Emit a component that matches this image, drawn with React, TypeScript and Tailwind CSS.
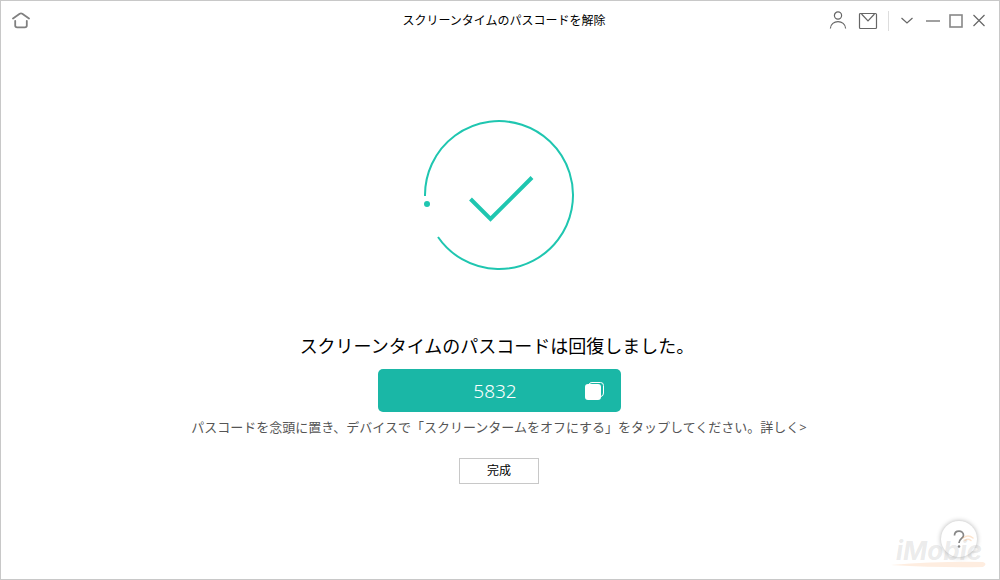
import type { ReactNode } from "react";

function TitleButton({ label, className, children }: { label: string; className: string; children: ReactNode }) {
    return (
        <button type="button" aria-label={label} className={`flex h-6 items-center justify-center text-[#666666] ${className}`}>
            {children}
        </button>
    );
}

function TitleBar() {
    return (
        <header className="grid h-10 grid-cols-[1fr_auto_1fr] items-center">
            <TitleButton label="ホーム" className="ml-2 w-6 justify-self-start">
                <svg width="20" height="18" viewBox="0 0 20 18" fill="none" stroke="#808080" strokeWidth="1.8" strokeLinecap="round" strokeLinejoin="round">
                    <path d="M2 6.5 L8.7 1.8 Q10 1 11.3 1.8 L18 6.5" />
                    <path d="M4.2 8.8 V13.5 Q4.2 15.4 6.2 15.4 H13.8 Q15.8 15.4 15.8 13.5 V8.8" />
                </svg>
            </TitleButton>

            <h1 className="pl-2 text-xs text-black">スクリーンタイムのパスコードを解除</h1>

            <div className="flex items-center justify-self-end pr-2">
                <TitleButton label="アカウント" className="w-6">
                    <svg width="18" height="20" viewBox="0 0 18 20" fill="none" stroke="currentColor" strokeWidth="1.2">
                        <circle cx="9" cy="4.5" r="3.6" />
                        <path d="M1.4 17.5 C1.6 8.4 16.4 8.4 16.6 17.5" />
                    </svg>
                </TitleButton>
                <TitleButton label="メール" className="ml-1.5 mr-2 w-6">
                    <svg width="20" height="18" viewBox="0 0 20 18" fill="none" stroke="currentColor" strokeWidth="1.2">
                        <rect x="1.5" y="1.5" width="17" height="15" rx="1" />
                        <path d="M3.500 2 L10 8.800 L16.500 2" />
                    </svg>
                </TitleButton>
                <span className="h-5 w-px bg-[#dddddd]" />
                <TitleButton label="メニュー" className="ml-1 w-7">
                    <svg width="14" height="8" viewBox="0 0 14 8" fill="none" stroke="currentColor" strokeWidth="1.2">
                        <path d="M1.5 1 L7 6 L12.5 1" />
                    </svg>
                </TitleButton>
                <TitleButton label="最小化" className="w-6">
                    <svg width="14" height="14" viewBox="0 0 14 14" fill="none" stroke="#a0a0a0" strokeWidth="2">
                        <path d="M0 7 H14" />
                    </svg>
                </TitleButton>
                <TitleButton label="最大化" className="w-[22px]">
                    <svg width="14" height="14" viewBox="0 0 14 14" fill="none" stroke="#888888" strokeWidth="1.6">
                        <rect x="1" y="1" width="12" height="12" />
                    </svg>
                </TitleButton>
                <TitleButton label="閉じる" className="w-6">
                    <svg width="14" height="14" viewBox="0 0 14 14" fill="none" stroke="currentColor" strokeWidth="1.2">
                        <path d="M1.5 1 L12.5 12 M12.5 1 L1.5 12" />
                    </svg>
                </TitleButton>
            </div>
        </header>
    );
}

function SuccessMark() {
    return (
        <svg width="152" height="152" viewBox="0 0 152 152" fill="none" stroke="#1fc6b0" aria-hidden="true">
            <path d="M2 76 A74 74 0 1 1 15 117" strokeWidth="2" />
            <circle cx="4" cy="84" r="3" fill="#1fc6b0" stroke="none" />
            <path d="M47.500 79 L67.500 99 L109 57.500" strokeWidth="4" />
        </svg>
    );
}

function HelpCorner() {
    return (
        <div className="absolute right-0 bottom-0 h-20 w-32">
            <button
                type="button"
                aria-label="ヘルプ"
                className="absolute right-[22px] bottom-[22px] flex h-9 w-9 items-center justify-center rounded-full bg-white shadow-[0_0_5px_rgba(0,0,0,0.3)]"
            >
                <svg width="14" height="20" viewBox="0 0 14 20" fill="none" stroke="#888888" strokeWidth="1.7">
                    <path d="M2.500 6.500 C2.500 0.600 11.500 0.600 11.500 6.200 C11.500 9.500 7 9.500 7 14" />
                    <circle cx="7" cy="17.500" r="1.300" fill="#888888" stroke="none" />
                </svg>
            </button>
            <svg className="pointer-events-none absolute inset-0" width="128" height="80" viewBox="0 0 128 80">
                <text x="25" y="61" fill="#888888" fillOpacity="0.18" fontFamily="Inter, sans-serif" fontSize="26" fontWeight="700" fontStyle="italic">
                    iMobie
                </text>
                <path d="M20 66 Q70 62 112 63 Q117 65 112 68 Q70 69 20 66 Z" fill="#f58220" fillOpacity="0.14" />
                <g fill="none" stroke="#f58220" strokeOpacity="0.22" strokeWidth="1.500" strokeLinecap="round">
                    <path d="M92 39 Q97 35 102 39" />
                    <path d="M94 41.500 Q97 39 100 41.500" />
                </g>
            </svg>
        </div>
    );
}

export default function App() {
    return (
        <div className="relative flex min-h-screen w-full flex-col border border-[#c8c8c8] bg-white font-['Noto_Sans','Noto_Sans_CJK_JP',sans-serif]">
            <TitleBar />

            <main className="flex flex-1 flex-col items-center px-4 pt-[79px] pr-[18px]">
                <SuccessMark />

                <h2 className="mt-[60px] pr-1 text-lg leading-7 text-black">スクリーンタイムのパスコードは回復しました。</h2>

                <div className="mt-[9px] grid h-[43px] w-[243px] grid-cols-[1fr_auto_1fr] items-center rounded-[5px] bg-[#1ab7a6] pr-4 pl-2 text-white">
                    <span className="col-start-2 text-[19px] leading-6 font-light">5832</span>
                    <button type="button" aria-label="コピー" className="justify-self-end">
                        <svg width="20" height="20" viewBox="0 0 20 20" fill="none">
                            <path d="M4 3.500 Q4.500 1.500 7 1.500 H15.500 Q18.500 1.500 18.500 4.500 V12 Q18.500 15 16 15.500" stroke="#ffffff" strokeWidth="1" />
                            <rect x="0" y="3" width="16" height="16" rx="3" fill="#ffffff" />
                        </svg>
                    </button>
                </div>

                <p className="mt-[3px] text-[13px] leading-6 text-[#555555]">
                    パスコードを念頭に置き、デバイスで「スクリーンタームをオフにする」をタップしてください。
                    <a href="#details">詳しく&gt;</a>
                </p>

                <button type="button" className="mt-[19px] h-[26px] w-20 border border-[#c8c8c8] bg-white text-xs text-black">
                    完成
                </button>
            </main>

            <HelpCorner />
        </div>
    );
}
